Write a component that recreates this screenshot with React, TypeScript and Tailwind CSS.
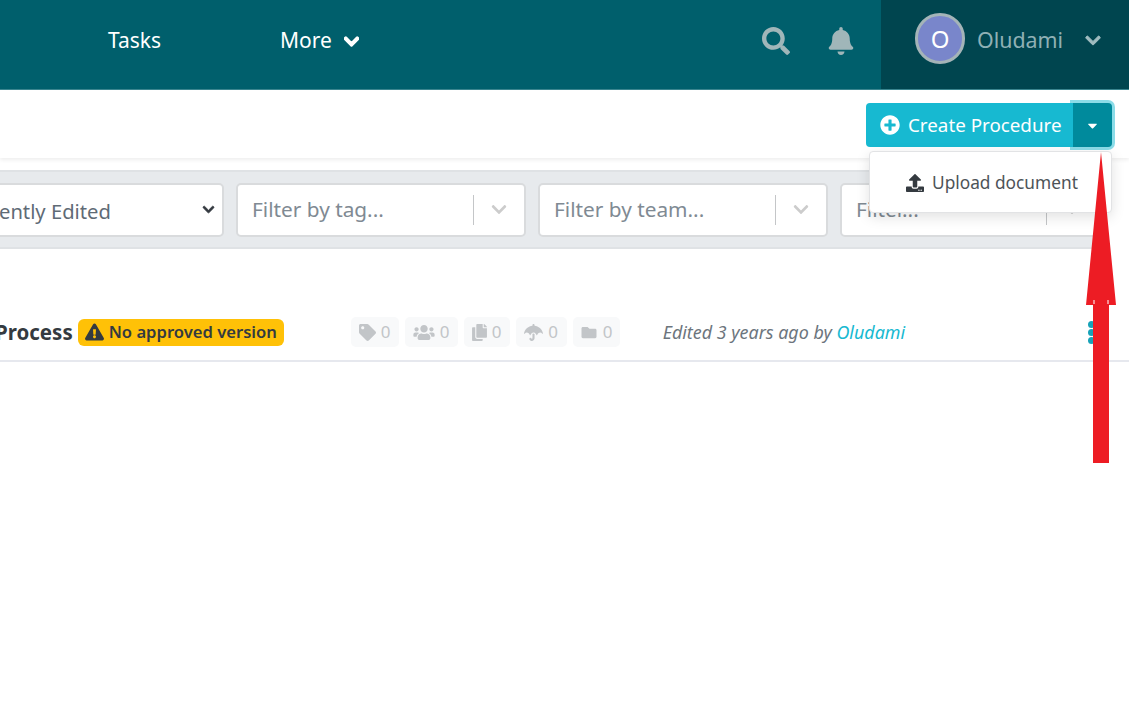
import { FaSearch, FaBell, FaChevronDown, FaPlusCircle, FaCaretDown, FaUpload, FaExclamationTriangle, FaTag, FaUsers, FaCopy, FaUmbrella, FaFolder } from 'react-icons/fa'
import type { ReactNode } from 'react'

function SelectFilter({ label, className }: { label: string; className: string }) {
  return (
    <div className={`flex h-[54px] shrink-0 items-center rounded-[5px] border-2 border-[#d9dbdd] bg-white pl-[14px] ${className}`}>
      <span className="flex-1 overflow-hidden whitespace-nowrap pt-[1px] text-[20.8px] text-[#808a93]">{label}</span>
      <div className="h-[30px] w-px bg-[#c4c6c8]" />
      <FaChevronDown className="mx-[16px] h-[17px] w-[18px] text-[#cccccc]" />
    </div>
  )
}

function Stat({ icon, value, className }: { icon: ReactNode; value: string; className: string }) {
  return (
    <div className={`flex h-[30px] items-center justify-center gap-[5px] rounded-[5px] bg-[#f8f9fa] text-[17px] text-[#c2c5c8] ${className}`}>
      {icon}
      <span>{value}</span>
    </div>
  )
}

export default function App() {
  return (
    <div className="relative h-[720px] w-[1129px] overflow-hidden bg-white font-['Noto_Sans','Open_Sans',sans-serif]">
      {/* top nav */}
      <header className="flex h-[90px] items-stretch border-b border-[#3b8791] bg-[#005f6c]">
        <nav className="flex flex-1 items-center pb-[7px] pl-[108px] text-[21px] text-white">
          <span className="w-[172px]">Tasks</span>
          <span>More</span>
          <FaChevronDown className="ml-[12px] h-[17px] w-[15px]" stroke="currentColor" strokeWidth={40} />
        </nav>
        <div className="flex items-center gap-[38px] pb-[8px] pr-[27px] text-[#a0b6b9]">
          <FaSearch className="h-[28px] w-[28px]" />
          <FaBell className="h-[28px] w-[26px]" />
        </div>
        <div className="flex w-[248px] items-center bg-[#00454f] pb-[12px] pl-[34px] text-[#8fb0b5]">
          <div className="flex h-[51px] w-[50px] items-center justify-center rounded-full border-[3px] border-[#a4b4b8] bg-[#7986cb] text-[24px] text-white">O</div>
          <span className="ml-[12px] mt-[3px] text-[21.4px]">Oludami</span>
          <FaChevronDown className="ml-[22px] mt-[3px] h-[17px] w-[16px] text-[#a0bcc0]" stroke="currentColor" strokeWidth={30} />
        </div>
      </header>

      {/* action bar */}
      <div className="flex h-[68px] items-start justify-end pr-[17px] pt-[13px] shadow-[0_2px_4px_rgba(0,0,0,0.07)]">
        <button className="flex h-[44px] w-[207px] items-center gap-[8px] rounded-l-[4px] bg-[#17b9d1] pl-[14px] text-[18.8px] text-white">
          <FaPlusCircle className="h-[20px] w-[20px]" />
          Create Procedure
        </button>
        <button className="flex h-[44px] w-[39px] items-center justify-center rounded-r-[4px] bg-[#008a9c] text-white shadow-[0_0_0_3px_rgba(23,185,209,0.5)]">
          <FaCaretDown className="h-[15px] w-[15px]" />
        </button>
      </div>

      {/* filter bar */}
      <div className="mt-[12px] flex h-[79px] w-[1100px] items-center gap-[12px] border-y-2 border-[#dfe2e5] bg-[#e7eaed]">
        <div className="-ml-[11px] flex h-[54px] w-[235px] shrink-0 items-center rounded-[5px] border-2 border-[#d9dbdd] bg-white pt-[3px]">
          <span className="flex-1 whitespace-nowrap pl-[8px] text-[20.2px] text-[#5f6b76]">ently Edited</span>
          <FaChevronDown className="mb-[4px] mr-[6px] h-[13px] w-[15px] text-[#343a40]" stroke="currentColor" strokeWidth={30} />
        </div>
        <SelectFilter label="Filter by tag..." className="w-[290px]" />
        <SelectFilter label="Filter by team..." className="w-[290px]" />
        <SelectFilter label="Filter..." className="w-[259px]" />
      </div>

      {/* procedure row */}
      <div className="mt-[55px] flex h-[58px] items-center border-b-2 border-[#e6e8ee]">
        <span className="-ml-[5px] text-[20.5px] font-bold text-[#343a40]">Process</span>
        <span className="ml-[5px] flex h-[27px] w-[206px] items-center gap-[5px] rounded-[6px] bg-[#ffc107] pl-[7px] text-[16.6px] font-semibold text-[#343a40]">
          <FaExclamationTriangle className="h-[18px] w-[19px] shrink-0" />
          No approved version
        </span>
        <div className="ml-[67px] flex gap-[6px]">
          <Stat icon={<FaTag className="h-[17px] w-[17px]" />} value="0" className="w-[48px]" />
          <Stat icon={<FaUsers className="h-[17px] w-[22px]" />} value="0" className="w-[53px]" />
          <Stat icon={<FaCopy className="h-[17px] w-[15px]" />} value="0" className="w-[46px]" />
          <Stat icon={<FaUmbrella className="h-[17px] w-[19px]" />} value="0" className="w-[51px]" />
          <Stat icon={<FaFolder className="h-[15px] w-[18px]" />} value="0" className="w-[47px]" />
        </div>
        <span className="ml-[43px] text-[17.9px] italic text-[#6c757d]">
          Edited 3 years ago by <span className="text-[#17b9d1]">Oludami</span>
        </span>
        <div className="ml-auto mr-[34px] flex flex-col gap-[1px]">
          <span className="h-[7px] w-[7px] rounded-full bg-[#17a2b8]" />
          <span className="h-[7px] w-[7px] rounded-full bg-[#17a2b8]" />
          <span className="h-[7px] w-[7px] rounded-full bg-[#17a2b8]" />
        </div>
      </div>

      {/* dropdown menu */}
      <div className="absolute left-[869px] top-[151px] flex h-[62px] w-[243px] items-center rounded-[4px] border border-[#e2e3e5] bg-white pl-[36px] pt-[2px] text-[17.3px] text-[#4d5358] shadow-[0_4px_14px_rgba(0,0,0,0.12)]">
        <FaUpload className="mr-[8px] h-[18px] w-[18px] text-[#343a40]" />
        Upload document
      </div>

      {/* annotation arrow */}
      <svg className="absolute left-[1080px] top-[150px]" width="45" height="320" viewBox="0 0 45 320">
        <polygon points="21,2 36,155 29,155 29,313 13,313 13,155 6,155" fill="#ed1c24" />
        <rect x="13.5" y="150" width="1" height="4" fill="#ffffff" />
        <rect x="27.5" y="150" width="1" height="4" fill="#ffffff" />
      </svg>
    </div>
  )
}
